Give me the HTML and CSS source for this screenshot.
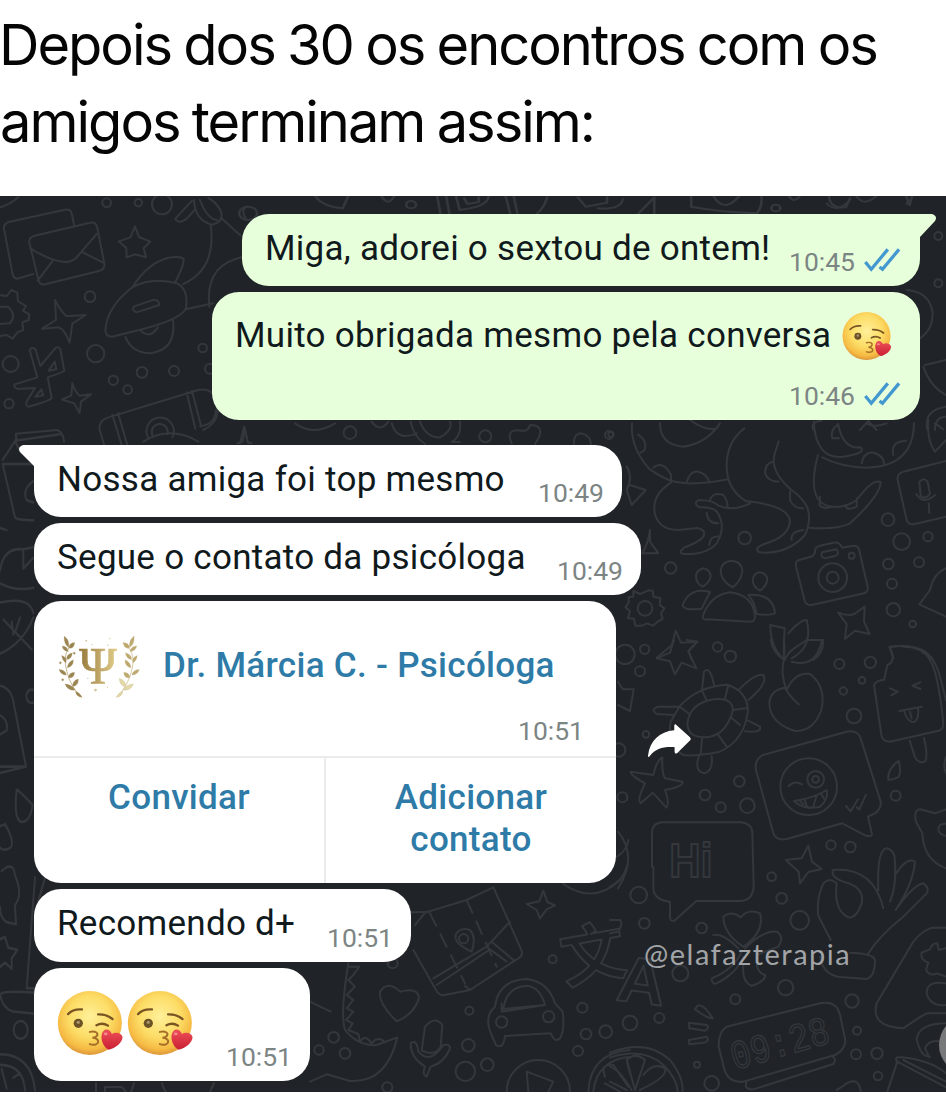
FILE: index.html
```html
<!DOCTYPE html>
<html lang="pt-BR">
<head>
<meta charset="utf-8">
<title>Depois dos 30</title>
<link rel="stylesheet" href="styles.css">
</head>
<body>
<svg class="defs" aria-hidden="true">
  <defs>
    <radialGradient id="face" cx=".5" cy=".4" r=".6">
      <stop offset="0" stop-color="#fff09a"/><stop offset=".55" stop-color="#fcdc65"/><stop offset=".85" stop-color="#f6bb43"/><stop offset="1" stop-color="#dc963a"/>
    </radialGradient>
    <linearGradient id="heart" x1="0" y1="0" x2="0" y2="1"><stop offset="0" stop-color="#ee5059"/><stop offset="1" stop-color="#c91f32"/></linearGradient>
    <linearGradient id="gold" x1="0" x2="1"><stop offset="0" stop-color="#967a3c"/><stop offset=".5" stop-color="#bda364"/><stop offset="1" stop-color="#e1cd88"/></linearGradient>
    <symbol id="kiss" viewBox="110 90 202 200">
      <circle cx="209" cy="190" r="97" fill="url(#face)"/>
      <g fill="none" stroke="#7a5524" stroke-width="7" stroke-linecap="round">
        <path d="M143 163Q158 147 185 149M234 164Q260 163 278 178M229 197Q247 187 264 198"/>
        <path stroke="#a46d28" stroke-width="6" d="M209 217C226 213 235 220 231 228Q228 234 217 235C237 237 239 251 226 255Q218 257 209 254"/>
      </g>
      <circle cx="174" cy="191" r="14" fill="#6c5227"/><circle cx="174" cy="188" r="5" fill="#a8946d"/>
      <path d="M266 271C240 256 239 219 254 211C264 207 272 215 276 223C286 216 304 219 308 232C309 250 286 267 266 271Z" fill="url(#heart)"/>
      <ellipse cx="257" cy="223" rx="6" ry="4" fill="#f58a8a"/>
    </symbol>
    <symbol id="ticks" viewBox="310 142 115 78">
      <path d="M317 187L335 209L385 149M360 202L369 209L419 149" fill="none" stroke="#4399cf" stroke-width="10"/>
    </symbol>
  </defs>
</svg>

<h1 class="caption">Depois dos 30 os encontros com os<br>amigos terminam assim:</h1>

<main class="chat">
  <svg class="wallpaper" viewBox="0 196 946 896" aria-hidden="true">
    <!-- top left: letters, rocket, satellite -->
    <g transform="translate(0 190) scale(.33333)">
      <path d="M0 52Q28 45 55 22M100 252L52 266Q42 266 38 254L12 116Q10 102 26 96L195 59Q211 57 215 70L222 104M104 137L270 98Q287 95 291 110L313 220Q316 236 300 242L136 283Q121 287 116 272L88 158Q85 142 104 137ZM90 174Q148 212 194 216Q222 216 235 196L290 132M157 214L113 272M246 186L310 218"/>
      <path d="M405 109L417 141L451 155L431 174L438 202L405 193L380 202L379 174L356 154L391 142Z"/>
      <path d="M316 420Q321 350 398 291Q455 260 532 280Q568 300 557 358Q535 393 402 424L336 440Q316 440 316 420ZM398 291Q440 221 505 203Q553 196 551 212Q548 235 526 276M402 349L462 329Q477 330 478 345L409 367Q394 361 402 349ZM557 358L640 340M550 282Q650 236 632 106M376 440Q395 490 453 490Q530 478 519 390M424 424Q450 447 474 412"/>
      <path d="M526 86L576 32M526 86Q534 105 560 86L584 60M582 30Q585 92 637 104Q675 94 661 60Q646 34 625 24M600 30Q620 85 650 90M663 83L720 135M628 350Q615 225 725 202M740 90Q720 60 740 50"/>
      <path d="M0 316L20 318L34 300L52 308L54 334L78 348L69 362L88 374L86 390L67 397L70 420L52 427L38 446L20 435L0 438M0 350H24Q52 375 29 400L0 402"/>
      <path d="M89 481Q92 470 106 477L121 528L163 478Q171 466 181 477L193 543Q181 550 143 562L155 624Q151 632 86 650Q77 648 79 636L105 594L53 597Q39 591 44 583L112 562ZM146 542L164 515L169 538ZM106 620L124 598L130 616Z"/>
      <circle cx="320" cy="38" r="13"/><circle cx="415" cy="38" r="11"/><circle cx="486" cy="43" r="30"/><circle cx="270" cy="320" r="16"/><circle cx="32" cy="522" r="24"/><circle cx="287" cy="491" r="26"/><circle cx="27" cy="641" r="14"/><circle cx="340" cy="571" r="14"/><circle cx="383" cy="599" r="13"/><circle cx="426" cy="547" r="16"/><circle cx="522" cy="543" r="15"/><circle cx="608" cy="474" r="13"/><circle cx="630" cy="536" r="15"/>
      <path d="M165 330Q182 364 200 379L257 375L217 401L209 458Q194 418 176 412L126 416L168 390ZM217 580Q225 606 239 617L273 613L243 635L239 669L222 640L186 629L214 616Z"/>
      <path d="M314 770L298 716Q298 690 323 683L594 600Q637 592 647 629L653 666Q650 700 610 720M337 674L365 765M354 669L382 765M560 607L586 716M576 603L604 710M444 742A41 41 0 1 1 517 742M457 735A24 24 0 1 1 502 733M430 755Q510 705 595 755M48 755V731L172 720Q190 728 192 755M720 760L732 710L745 760"/>
    </g>
    <!-- strip above the first bubble -->
    <g transform="translate(240 190) scale(.4503 .33333)">
      <path d="M168 20Q185 50 228 55L240 20M315 20Q328 50 342 20M438 20L445 70M458 20L465 70M480 20L488 60Q550 50 552 20M498 25L505 42L530 36V22M590 20L600 70M608 20L616 70M682 22Q675 55 660 70M750 22L768 50L815 38V22M795 55Q845 60 850 28M885 70L920 22V70M1002 20V50Q1060 65 1148 70Q1160 50 1158 20M1052 20Q1075 70 1108 20M1220 20Q1230 40 1242 20M1308 20Q1310 55 1345 52L1355 25M1370 20Q1385 50 1412 20M1480 20L1487 45L1492 20"/><circle cx="380" cy="44" r="11"/><circle cx="1190" cy="54" r="10"/><circle cx="18" cy="70" r="20"/>
    </g>
    <!-- strip between sent and received -->
    <g transform="translate(200 410) scale(.33333)">
      <path d="M0 48Q45 45 48 0M112 100L128 95L134 52L142 95L155 100M285 40Q340 80 405 40M515 35Q540 70 565 35M575 40Q590 95 650 70M632 35Q640 80 675 102M660 35Q680 85 720 82Q760 60 750 35M780 35Q785 80 755 96H780M935 100Q915 55 965 62Q985 65 990 45Q1030 45 1018 80L1005 102M1122 102Q1120 70 1145 70Q1175 80 1172 102"/><circle cx="450" cy="68" r="19"/><circle cx="856" cy="79" r="18"/><circle cx="1227" cy="75" r="12"/>
    </g>
    <!-- right of the sent bubbles -->
    <g transform="translate(760 200) scale(.33333)">
      <circle cx="535" cy="108" r="12"/><circle cx="535" cy="250" r="12"/><path d="M440 270Q510 275 518 340Q518 390 480 415M490 500Q510 560 558 585M495 495L558 480M502 690Q490 630 558 620M525 690Q525 650 558 650M160 690Q150 665 185 662M300 690L325 663L350 690M440 12L445 0M200 10Q230 40 265 5"/>
    </g>
    <!-- snake, people, camera -->
    <g transform="translate(610 420) scale(.33333)">
      <path d="M66 10Q60 80 117 146Q175 190 230 190Q290 192 353 178M150 10Q150 75 220 80Q290 70 330 10M240 0Q290 35 320 25M403 25Q350 65 350 137Q350 210 410 244Q530 255 540 300Q540 350 460 373Q430 385 448 397Q530 405 585 345Q605 300 592 262Q575 230 544 210Q475 150 496 95L506 64M84 44Q112 60 104 90L92 98M130 143Q160 120 183 165V185M230 187Q240 150 265 155Q290 160 298 187M183 188Q125 225 134 278Q145 330 205 330L262 324Q290 330 280 350Q270 365 222 383Q203 398 220 402Q290 405 320 370Q350 320 322 277Q310 260 268 262Q248 250 265 240Q310 240 325 257Q370 275 420 250M300 240Q308 215 340 225Q355 245 352 262M290 278Q292 310 325 310M330 350Q300 345 298 375M488 125Q465 130 465 160Q475 185 506 185M540 215V240Q550 265 580 265M580 330Q540 335 545 360"/>
      <path d="M611 5Q618 120 700 110Q770 100 752 82Q700 90 684 12M684 14Q660 30 667 55H687M637 112Q690 140 770 143Q910 140 912 10M755 130Q760 100 785 97Q820 105 822 130M850 105Q840 65 888 62M624 104Q580 270 690 260Q730 255 748 230Q790 175 812 186Q812 225 720 310Q680 330 597 323M630 230L628 255Q640 270 668 260M706 255Q710 275 740 260V235M770 10Q790 25 830 10"/>
      <path d="M955 0Q950 60 975 95L1008 60M975 10L1000 28M1008 123L880 155Q860 162 863 180L890 300Q895 316 915 312L1008 290M928 186Q942 170 953 186L960 221Q948 240 932 228ZM919 222Q940 256 975 225M956 250L958 279"/>
      <path d="M607 409L565 421Q555 425 558 440L585 545Q590 557 605 555L762 520Q775 516 773 500L747 388Q742 375 725 378L696 383Q690 365 670 368L630 377Q613 380 615 398ZM636 397L680 388Q690 405 675 408L645 415Q630 412 636 397Z"/><circle cx="668" cy="473" r="43"/><circle cx="668" cy="473" r="18"/><circle cx="725" cy="407" r="9"/>
      <path d="M365 422Q397 425 397 455Q392 485 368 502Q335 485 332 455Q332 425 365 422ZM280 445Q302 450 302 470Q298 490 278 500Q258 490 258 468Q260 450 280 445ZM448 457Q472 460 472 480Q468 500 450 512Q428 500 428 480Q430 460 448 457ZM278 590Q300 525 360 517Q430 525 435 590Q435 606 420 605L290 598Q278 600 278 590ZM300 516Q240 500 218 555Q220 573 275 566M415 525Q490 520 495 580Q480 587 440 582M415 525Q435 550 440 582M300 516L275 566"/>
      <path d="M70 513L91 522L115 511L128 512L131 531L151 534L149 555L163 565L153 580L158 597L143 605L129 617L111 610L96 617L76 617L72 596L54 594L60 574L46 562L56 548L56 531L70 530Z"/><circle cx="105" cy="565" r="22"/>
      <path d="M197 632L213 668L262 665L235 692L245 719M197 632L185 676L140 713M481 615L524 625Q520 680 522 720M481 615Q480 680 522 720M535 640Q570 600 590 600Q610 680 545 715M592 660H640Q640 700 610 720M838 680Q920 670 965 715M838 680L850 715M880 680Q930 680 940 700M1008 445Q970 460 960 510L928 553L1008 590M50 140Q70 170 50 210L65 255L107 210L60 195M120 330Q115 370 97 400H145L120 365V330"/>
      <path d="M684 578Q715 590 733 582L764 560L762 605L779 642L735 632L705 656L710 612Z"/>
      <circle cx="404" cy="354" r="19"/><circle cx="182" cy="444" r="17"/><circle cx="834" cy="299" r="19"/><circle cx="875" cy="365" r="25"/><circle cx="954" cy="350" r="14"/><circle cx="835" cy="432" r="16"/><circle cx="927" cy="427" r="15"/><circle cx="846" cy="491" r="15"/><circle cx="850" cy="569" r="20"/><circle cx="908" cy="612" r="10"/><circle cx="3" cy="43" r="8"/>
    </g>
    <!-- turtle, cherry, popsicle, stickers -->
    <g transform="translate(610 640) scale(.33333)">
      <path d="M140 55L180 38L192 0M230 0L262 5L235 35L259 85L215 68L195 103L180 64L140 55M24 125L38 148L71 148L60 213L24 195"/>
      <path d="M208 200Q260 140 350 134Q410 150 414 210Q405 300 330 335Q250 350 220 345Q170 315 182 245ZM232 250Q240 190 310 178Q365 170 369 210Q350 280 300 290Q235 300 232 250ZM276 152L290 181M355 135L345 176M408 205L370 210M390 255L362 232M350 320L324 284M272 342L276 294M208 200L238 222M276 150L282 95Q300 75 312 135M388 148Q435 100 460 105Q475 130 415 180M208 200H145Q120 208 140 222L190 225M414 242L450 260Q455 280 405 274M268 345Q250 395 285 400Q310 390 305 348"/>
      <path d="M482 0Q490 40 522 58Q510 100 530 150Q555 95 600 102Q650 140 634 210Q610 275 555 273Q480 250 478 190Q480 150 525 143Q540 170 566 193M522 0Q525 30 522 58M524 60Q535 35 560 20L590 0M545 65Q620 85 636 0"/>
      <path d="M840 22Q930 5 960 60Q985 100 1000 250Q1000 270 985 272L840 305Q820 305 815 290L792 135Q800 120 822 120L832 75Q850 70 848 45ZM920 24Q975 35 995 130L1008 180M840 145L863 155L844 166M931 127L907 137L931 147M868 213L935 200M882 213Q895 250 913 246Q928 235 924 205M900 215L905 235M899 302L914 350Q925 372 945 365Q955 350 942 294"/>
      <path d="M459 345L710 275Q742 268 752 295L812 485Q815 505 795 520L774 530L786 583Q785 592 765 586L697 550L530 597Q500 603 490 580L438 390Q432 360 459 345Z"/><circle cx="596" cy="440" r="85"/><circle cx="617" cy="418" r="25"/><circle cx="617" cy="418" r="10"/><path d="M536 438Q556 420 576 433M552 483Q610 475 650 450Q655 480 630 500Q580 510 552 483ZM585 480Q590 515 610 500L620 465M566 480L580 492M632 459L642 476M708 498L722 514L744 478M740 502L748 508L768 464"/>
      <path d="M62 395L130 405Q140 360 157 352Q155 400 165 415L218 425Q220 440 165 450Q180 490 169 503L128 458L92 490Q80 480 105 430Q60 405 62 395ZM835 420Q832 385 866 363Q875 400 865 411Q850 420 835 420ZM1008 508L975 520L930 508Q910 510 918 545L937 580Q940 660 1008 685M1008 551Q985 550 985 570Q990 585 1008 587M1008 350Q998 380 1008 400M24 575Q85 650 24 745"/>
      <path d="M126 680V580Q126 547 160 547H392Q427 550 427 580L431 740Q428 782 390 783H259L193 842Q180 845 180 832V785Q132 780 130 745V680"/>
      <path d="M595 617L606 665L635 687L595 696L570 730L566 695L527 660L575 655Z"/>
      <circle cx="45" cy="43" r="29"/><circle cx="104" cy="28" r="14"/><circle cx="90" cy="94" r="15"/><circle cx="323" cy="21" r="14"/><circle cx="361" cy="49" r="17"/><circle cx="688" cy="72" r="15"/><circle cx="781" cy="67" r="17"/><circle cx="756" cy="121" r="10"/><circle cx="700" cy="153" r="11"/><circle cx="732" cy="228" r="22"/><circle cx="388" cy="424" r="16"/><circle cx="285" cy="465" r="16"/><circle cx="332" cy="502" r="15"/><circle cx="412" cy="497" r="22"/><circle cx="663" cy="615" r="14"/><circle cx="721" cy="621" r="16"/><circle cx="857" cy="467" r="15"/><circle cx="37" cy="472" r="15"/><circle cx="108" cy="283" r="10"/><circle cx="26" cy="330" r="20"/>
      <text class="doodle-text" x="178" y="711" font-size="145" textLength="130" lengthAdjust="spacingAndGlyphs">Hi</text>
    </g>
    <!-- hand, clover, clock, gamepad -->
    <g transform="translate(610 860) scale(.33333)">
      <path d="M669 30Q790 20 820 145M669 30Q660 50 700 65Q765 80 755 130Q740 175 715 172Q670 150 680 70Q660 50 640 70Q620 110 624 165L662 240M805 90Q800 -30 830 -35Q855 -30 855 5Q860 80 840 125M855 45Q890 -10 915 5Q910 70 857 150Q910 75 940 70Q960 85 950 100L880 170Q810 225 775 280M630 290Q640 350 700 352L770 357Q795 350 795 300Q790 280 720 278"/>
      <path d="M400 260Q340 220 340 170Q365 150 392 172Q415 145 450 160Q465 215 400 260ZM405 265Q460 210 500 215Q525 230 505 260L440 285M385 265Q340 220 310 225M395 275Q370 330 305 355Q305 375 320 370Q380 340 400 290M400 315Q395 365 425 378Q465 365 466 345Q445 340 440 315"/>
      <path d="M350 500L630 430Q680 420 690 465L706 540Q706 570 675 585L400 665Q360 670 345 635L326 560Q325 515 350 500ZM410 665Q400 690 430 688L670 612Q680 600 670 592"/>
      <path d="M262 437Q280 430 308 475Q290 475 255 448ZM237 488L290 495Q300 505 285 512L238 505ZM237 540L290 530Q300 545 280 548L238 553Z"/>
      <path d="M1008 203H965Q920 220 895 270L800 430Q780 500 880 505Q930 470 950 460H1008M982 250L986 270L1008 265M982 250Q965 250 960 268L935 278Q930 300 955 308L948 330Q960 350 980 340L1008 350M1008 370Q950 360 950 400Q960 440 1008 435M1008 490Q930 490 920 535Q930 590 960 590M1008 550Q960 530 945 565L958 592M832 695L862 605Q850 590 875 592Q960 600 1008 640M862 605L1008 682M880 600L1008 665"/>
      <path d="M0 0Q50 -20 55 -60M0 80Q40 60 50 20M0 180H30Q40 190 25 215L0 220M0 578Q110 535 180 600Q220 650 218 693M0 593Q100 560 160 615Q200 655 203 693M50 600Q75 575 105 600L75 690ZM100 645Q130 605 165 625Q175 650 90 690M0 620Q30 630 65 690M0 665L50 690M680 690Q700 680 710 670Q745 650 752 693"/>
      <circle cx="86" cy="105" r="25"/><circle cx="103" cy="190" r="16"/><circle cx="275" cy="204" r="16"/><circle cx="569" cy="181" r="28"/><circle cx="515" cy="115" r="16"/><circle cx="485" cy="50" r="13"/><circle cx="211" cy="340" r="24"/><circle cx="60" cy="489" r="22"/><circle cx="148" cy="474" r="15"/><circle cx="376" cy="418" r="15"/><circle cx="527" cy="383" r="23"/><circle cx="726" cy="423" r="20"/><circle cx="741" cy="512" r="12"/><circle cx="738" cy="583" r="15"/><circle cx="801" cy="580" r="17"/><circle cx="804" cy="648" r="13"/><circle cx="305" cy="670" r="22"/><circle cx="261" cy="614" r="9"/>
      <text class="doodle-text" transform="translate(15 420) rotate(7)" x="0" y="0" font-size="195" textLength="145" lengthAdjust="spacingAndGlyphs">A</text>
      <text class="doodle-clock" transform="translate(374 630) rotate(-16)" x="0" y="0" font-size="122" textLength="304" lengthAdjust="spacingAndGlyphs">09:28</text>
    </g>
    <!-- map, heart, microphone, car -->
    <g transform="translate(310 880) scale(.33333)">
      <path d="M0 145L50 105L360 95M315 135L345 98L470 60L550 22L590 110L636 215Q638 230 620 238L480 330L400 346Q385 345 375 325L310 210M370 295L530 200L600 125M380 315L540 208L590 245M545 185L610 240M480 330L465 318"/>
      <path stroke-dasharray="42 28" d="M360 100L465 310M470 60L560 260"/>
      <path d="M485 215Q430 190 437 165Q450 140 480 150Q500 170 485 215Z"/><circle cx="461" cy="176" r="14"/>
      <path d="M650 72L688 64L700 32L712 66L735 76L710 88L690 115L680 90ZM760 12Q850 75 930 0"/>
      <path d="M260 424Q205 370 210 335Q235 300 270 335Q325 320 327 355Q310 405 260 424ZM345 440Q375 405 397 435L392 500Q375 530 335 512ZM302 490Q320 475 325 515Q360 555 400 495Q425 490 418 510Q400 550 362 560L350 590Q335 585 345 560Q300 530 302 490Z"/>
      <path d="M555 380Q565 300 650 297Q715 305 735 370L758 395Q765 450 750 475Q735 490 722 460L585 468Q580 510 558 495L545 465Q520 410 555 380ZM580 387Q590 320 650 317Q690 320 705 375ZM575 370V395L705 375"/><circle cx="575" cy="426" r="17"/><circle cx="716" cy="410" r="17"/>
      <path d="M115 250Q90 400 105 450Q145 500 200 495L262 472Q230 610 120 603L50 583L0 605M115 260H148L130 285L115 300L135 320L110 345L130 360L110 385L130 395L108 420L128 430L115 450L145 462L150 485Q165 460 185 490Q205 465 225 487M0 365L62 395"/>
      <path d="M590 635A95 95 0 0 1 780 635M650 575L655 635M650 575L730 605L715 635M835 635Q840 520 960 510M850 635Q860 540 960 530M885 590Q870 550 910 555L955 620M950 540L960 580M885 610L930 635"/>
      <circle cx="478" cy="392" r="12"/><circle cx="728" cy="238" r="12"/><circle cx="475" cy="496" r="19"/><circle cx="466" cy="574" r="29"/><circle cx="532" cy="554" r="19"/><circle cx="817" cy="383" r="15"/><circle cx="828" cy="462" r="16"/><circle cx="887" cy="455" r="19"/><circle cx="804" cy="513" r="15"/><circle cx="71" cy="472" r="16"/><circle cx="27" cy="510" r="14"/><circle cx="105" cy="520" r="16"/><circle cx="232" cy="622" r="15"/><circle cx="248" cy="250" r="15"/>
      <text class="doodle-text doodle-cjk" transform="translate(765 310) rotate(-10)" x="0" y="0" font-size="195">文</text>
    </g>
    <!-- left margin -->
    <g transform="translate(0 430) scale(.33333 .42608)">
      <path d="M45 25L180 10M45 25L60 50M8 70L50 20M8 80L45 205Q50 212 100 212M8 80H100M100 120Q65 140 80 165L100 170M0 230L20 235M0 330Q10 275 70 280L100 275M70 280V325L100 300M0 360Q50 380 100 370M0 405Q90 390 100 430M10 445L95 515M35 450L40 480M60 440L45 475M0 525Q70 500 100 440M0 600Q35 605 42 645L78 790L0 805M0 790L78 790M0 670Q25 680 20 705L0 715M98 880Q50 840 50 845Q40 915 65 920Q90 920 98 880ZM0 930L15 925Q45 965 32 980Q10 990 0 980M5 1035Q40 1010 45 1045Q70 1090 45 1115L48 1160L20 1155Q0 1145 0 1120M0 1195L15 1190L25 1215L52 1220L35 1240V1265L15 1250L0 1260M105 1050L80 1310H105M135 1050L110 1120M0 1325Q5 1315 100 1320M0 1325Q10 1360 40 1365L105 1370M0 1465Q95 1465 105 1550M0 1490Q70 1490 75 1550M5 1500L20 1545M40 1520L60 1510"/>
      <circle cx="62" cy="1408" r="21"/><circle cx="95" cy="625" r="16"/>
    </g>
    <path d="M96 1092V1083M105 1092V1087H122L126 1092M134 1083L131 1092M162 1083Q164 1090 166 1092M214 1083L210 1092"/>
  </svg>
  <div class="edge-dot"></div>

  <section class="sent">
    <div class="bubble out first">
      <svg class="tail" viewBox="0 0 40 27"><path d="M0 0H35Q41 2 38 7L23 23Q20 26 20 27H0Z"/></svg>
      <p class="text">Miga, adorei o sextou de ontem!</p>
      <span class="time">10:45</span><svg class="ticks"><use href="#ticks"/></svg>
    </div>
    <div class="bubble out second">
      <p class="text line"><span>Muito obrigada mesmo pela conversa</span><svg class="kiss small"><use href="#kiss"/></svg></p>
      <div class="meta"><span class="time">10:46</span><svg class="ticks"><use href="#ticks"/></svg></div>
    </div>
  </section>

  <section class="received">
    <div class="bubble in b3">
      <svg class="tail left" viewBox="0 0 40 27"><path d="M40 0H6Q0 2 3 7L17 21Q20 24 20 27H40Z"/></svg>
      <p class="text">Nossa amiga foi top mesmo</p><span class="time">10:49</span>
    </div>
    <div class="bubble in b4"><p class="text">Segue o contato da psicóloga</p><span class="time">10:49</span></div>
    <div class="row">
      <article class="card">
        <header class="contact">
          <svg class="logo" viewBox="50 65 260 205">
            <text class="psi" x="119" y="222" font-size="157" textLength="113" lengthAdjust="spacingAndGlyphs" fill="url(#gold)" stroke="url(#gold)" stroke-width="2">Ψ</text>
            <g fill="#9b8552" stroke="#a8945f" stroke-width="1">
              <path d="M74 78Q82 100 88 112Q68 140 82 185Q92 230 126 262" fill="none" stroke-width="2"/>
              <path d="M74 78Q72 100 86 111Q92 92 74 78ZM105 97Q88 98 88 113Q103 117 105 97ZM68 107Q68 121 86 124Q83 108 68 107ZM98 128Q80 131 81 148Q96 147 98 128ZM66 136Q68 152 79 158Q84 142 66 136ZM101 149Q84 157 83 173Q102 169 101 149ZM58 178Q63 194 80 195Q79 180 58 178ZM105 187Q89 186 86 202Q102 207 105 187ZM116 207Q98 212 99 229Q117 229 116 207ZM76 222Q84 243 106 240Q97 223 76 222ZM108 244Q122 248 127 262Q109 259 108 244Z"/>
              <circle cx="62" cy="158" r="3"/><circle cx="104" cy="129" r="3"/><circle cx="69" cy="209" r="3"/>
            </g>
            <g fill="#bda970" stroke="#c4b27e" stroke-width="1">
              <path d="M285 78Q276 100 268 112Q290 140 276 185Q264 230 232 262" fill="none" stroke-width="2"/>
              <path d="M284 78Q286 100 272 111Q266 92 284 78ZM251 97Q270 98 270 113Q255 117 251 97ZM292 107Q290 121 272 124Q275 108 292 107ZM258 128Q276 131 277 148Q262 147 258 128ZM294 136Q292 152 281 158Q276 142 294 136ZM257 149Q274 157 275 173Q256 169 257 149ZM300 178Q295 194 278 195Q279 180 300 178ZM253 187Q269 186 272 202Q256 207 253 187Z"/>
              <path fill="#e3d8a8" d="M240 205Q260 212 259 229Q241 229 240 205ZM282 222Q274 243 252 240Q261 223 282 222ZM250 244Q236 248 231 262Q249 259 250 244Z"/>
            </g>
            <g fill="#d3c59a"><circle cx="140" cy="91" r="3"/><circle cx="157" cy="103" r="2"/><circle cx="211" cy="85" r="2"/><circle cx="205" cy="105" r="2"/><circle cx="168" cy="240" r="4"/><circle cx="204" cy="231" r="2"/><circle cx="145" cy="205" r="2"/></g>
          </svg>
          <h2 class="name">Dr. Márcia C. - Psicóloga</h2>
        </header>
        <span class="time card-time">10:51</span>
        <div class="actions"><button class="action a1">Convidar</button><button class="action a2">Adicionar<br>contato</button></div>
      </article>
      <svg class="forward" viewBox="110 248 137 106"><path d="M113 348C118 302 148 274 193 270V256Q194 248 201 255L240 290Q246 296 240 302L203 338Q195 345 194 335V321C160 319 137 324 118 349Q113 354 113 348Z" fill="#fff"/></svg>
    </div>
    <div class="bubble in b6"><p class="text">Recomendo d+</p><span class="time">10:51</span></div>
    <div class="bubble in b7"><div class="kisses"><svg class="kiss"><use href="#kiss"/></svg><svg class="kiss"><use href="#kiss"/></svg></div><span class="time">10:51</span></div>
  </section>
  <span class="handle">@elafazterapia</span>
</main>
</body>
</html>
```
FILE: styles.css
```css
* { box-sizing: border-box; }
body { margin: 0; background: #fff; font-family: Roboto, sans-serif; width: 946px; height: 1098px; overflow: hidden; }
p, h1, h2 { margin: 0; font-weight: 400; }
.defs { position: absolute; width: 0; height: 0; }

.caption { height: 196px; padding-top: 7px; font-family: Inter, sans-serif; font-size: 56px; line-height: 77px; letter-spacing: -2px; word-spacing: -1.5px; color: #050505; white-space: nowrap; text-indent: -1px; }

.chat { position: relative; height: 896px; padding-top: 18px; background: #202428; overflow: hidden; }
.wallpaper { position: absolute; inset: 0; width: 946px; height: 896px; fill: none; stroke: #34383d; stroke-width: 2; stroke-linecap: round; stroke-linejoin: round; }
.wallpaper g { stroke-width: 6; }
.doodle-text { font-family: "Liberation Sans", sans-serif; font-weight: 700; }
.doodle-cjk { font-family: "Noto Sans CJK SC", sans-serif; }
.doodle-clock { font-family: "Liberation Mono", monospace; stroke-width: 4; }
.edge-dot { position: absolute; left: 939px; top: 820px; width: 58px; height: 58px; border-radius: 50%; background: #77797a; }

.sent, .received { position: relative; display: flex; flex-direction: column; gap: 6px; }
.sent { align-items: flex-end; padding-right: 26px; }
.received { align-items: flex-start; padding-left: 34px; margin-top: 25px; }

.bubble { position: relative; display: flex; justify-content: space-between; height: 72px; padding: 0 18px 0 23px; border-radius: 27px; white-space: nowrap; }
.out { background: #e8ffdb; padding-right: 19px; }
.in { background: #fff; }
.first { width: 678px; border-top-right-radius: 0; }
.second { width: 708px; height: 128px; display: block; padding-top: 9px; }
.b3 { width: 588px; border-top-left-radius: 0; }
.b4 { width: 607px; }
.b6 { width: 377px; height: 73px; }
.b7 { width: 276px; height: 113px; }

.tail { position: absolute; top: 0; right: -17px; width: 40px; height: 27px; fill: #e8ffdb; }
.tail.left { right: auto; left: -17px; fill: #fff; }

.text { font-size: 35px; line-height: 69px; color: #10191c; letter-spacing: .27px; }
.line { display: flex; align-items: center; gap: 11px; }
.time { font-size: 26.5px; line-height: 30px; color: #7c8584; letter-spacing: 0; align-self: flex-end; margin-bottom: 9px; }
.first .time { margin-left: auto; margin-right: 8px; }
.ticks { width: 38px; height: 26px; align-self: flex-end; margin-bottom: 13px; }
.meta { display: flex; justify-content: flex-end; gap: 8px; margin-top: 11px; }
.second .line { height: 69px; }
.meta .time { margin-bottom: 0; }
.meta .ticks { margin-bottom: 4px; }
.kiss { display: block; width: 67px; height: 66px; }
.kiss.small { width: 50px; height: 50px; }
.kisses { display: flex; gap: 3px; padding-top: 22px; }

.row { display: flex; align-items: center; gap: 31px; }
.card { display: flex; flex-direction: column; width: 582px; height: 282px; border-radius: 27px; background: #fff; }
.contact { display: flex; align-items: center; gap: 20px; height: 100px; padding: 30px 0 0 22px; }
.logo { width: 87px; height: 68px; }
.psi { font-family: "Liberation Serif", serif; font-weight: 400; }
.name { font-size: 35px; font-weight: 500; line-height: 40px; color: #2e7ba8; white-space: nowrap; letter-spacing: .3px; }
.card-time { margin: 15px 32px 10px 0; }
.actions { display: grid; grid-template-columns: 292px 1fr; flex: 1; border-top: 2px solid #e9ebed; }
.action { display: flex; justify-content: center; border: 0; padding: 19px 0 0; background: none; font: 500 35px/42px Roboto, sans-serif; letter-spacing: .3px; color: #2e7ba8; }
.a1 { border-right: 2px solid #e9ebed; }
.forward { width: 45px; height: 35px; margin-top: -4px; }
.handle { position: absolute; left: 644px; top: 740px; font-family: Lato, sans-serif; font-size: 29px; line-height: 36px; letter-spacing: 1.5px; color: #a2a4a7; }
```
